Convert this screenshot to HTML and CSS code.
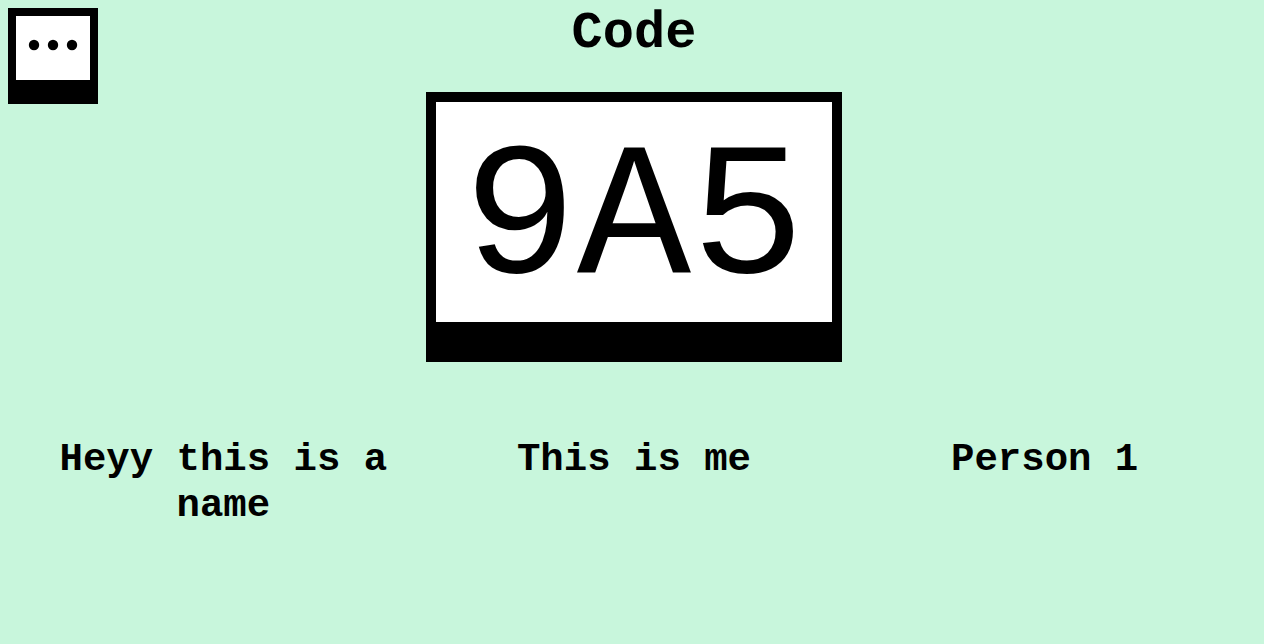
FILE: index.html
```html
<!DOCTYPE html>
<html lang="en">
<head>
<meta charset="utf-8">
<meta name="viewport" content="width=device-width, initial-scale=1">
<title>Code</title>
<link rel="stylesheet" href="styles.css">
</head>
<body>
<button class="menu" type="button" aria-label="Menu">
<svg class="menu-dots" viewBox="0 0 50 12" aria-hidden="true"><circle cx="6" cy="6" r="5.2"/><circle cx="25" cy="6" r="5.2"/><circle cx="44" cy="6" r="5.2"/></svg>
</button>
<main class="lobby">
<h1 class="title">Code</h1>
<div class="code">9A5</div>
<ul class="players">
<li class="player">Heyy this is a name</li>
<li class="player">This is me</li>
<li class="player">Person 1</li>
</ul>
</main>
</body>
</html>
```
FILE: styles.css
```css
* {
  box-sizing: border-box;
}

body {
  margin: 0;
  background: #c8f6dc;
  color: #000;
  font-family: Courier, "Courier New", "Liberation Mono", monospace;
}

.menu {
  position: absolute;
  top: 8px;
  left: 8px;
  padding: 23px 12px 29px;
  border: 8px solid #000;
  border-bottom-width: 24px;
  border-radius: 0;
  background: #fff;
  line-height: 0;
  cursor: pointer;
}

.menu-dots {
  width: 50px;
  height: 12px;
}

.lobby {
  display: flex;
  flex-direction: column;
  align-items: center;
  padding: 4px 14px 0 18px;
}

.title {
  margin: 0 0 28px;
  font-size: 52px;
  line-height: 60px;
}

.code {
  padding: 20px 27px 0;
  border: 10px solid #000;
  border-bottom-width: 40px;
  background: #fff;
  font-size: 190px;
  line-height: 200px;
}

.players {
  display: grid;
  grid-template-columns: repeat(3, 1fr);
  width: 100%;
  margin: 75px 0 0;
  padding: 0;
  list-style: none;
}

.player {
  padding: 0 40px;
  font-size: 39px;
  font-weight: bold;
  line-height: 46px;
  text-align: center;
}
```
